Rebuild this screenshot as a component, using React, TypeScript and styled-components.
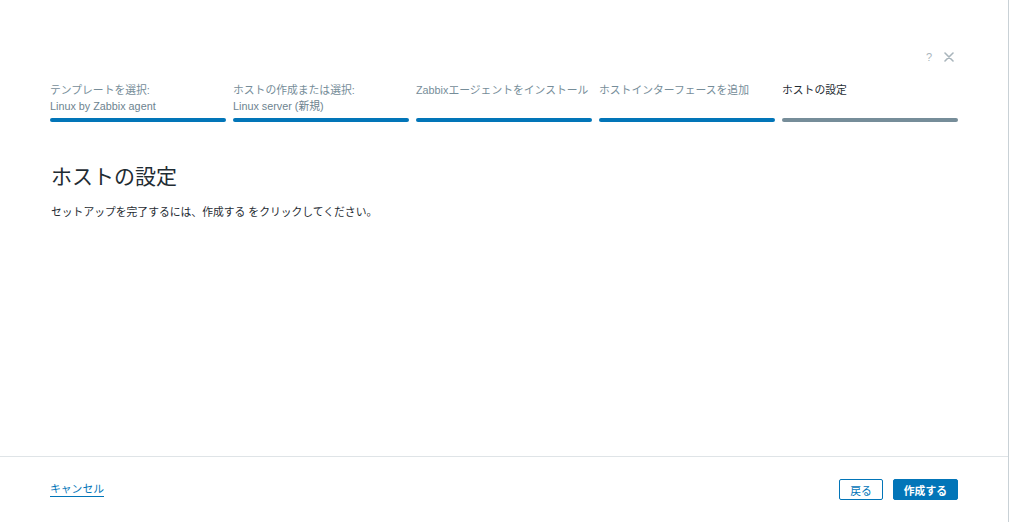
import styled, { createGlobalStyle } from "styled-components";

const GlobalStyle = createGlobalStyle`
  html, body {
    margin: 0;
    padding: 0;
    background: #ffffff;
  }
  body {
    font-family: "Liberation Sans", Arial, "Noto Sans CJK JP", sans-serif;
    font-size: 10.8px;
    color: #1f2c33;
  }
`;

const steps = [
  { title: "テンプレートを選択:", value: "Linux by Zabbix agent", done: true },
  { title: "ホストの作成または選択:", value: "Linux server (新規)", done: true },
  { title: "Zabbixエージェントをインストール", done: true },
  { title: "ホストインターフェースを追加", done: true },
  { title: "ホストの設定", done: false, current: true },
];

function App() {
  return (
    <>
      <GlobalStyle />
      <Dialog>
        <Head>
          <HeadButton title="ヘルプ">?</HeadButton>
          <CloseButton title="閉じる">
            <svg width="10" height="10" viewBox="0 0 10 10">
              <path d="M1 1 L9 9 M9 1 L1 9" stroke="currentColor" strokeWidth="1.6" strokeLinecap="round" />
            </svg>
          </CloseButton>
        </Head>
        <Body>
          <Steps>
            {steps.map((s) => (
              <Step key={s.title}>
                <StepTitle $current={!!s.current}>{s.title}</StepTitle>
                <StepValue>{s.value ?? "\u00a0"}</StepValue>
                <StepBar $done={s.done} />
              </Step>
            ))}
          </Steps>
          <Title>ホストの設定</Title>
          <Description>
            セットアップを完了するには、作成する をクリックしてください。
          </Description>
        </Body>
        <Footer>
          <CancelLink href="#">キャンセル</CancelLink>
          <Buttons>
            <OutlineButton>戻る</OutlineButton>
            <PrimaryButton>作成する</PrimaryButton>
          </Buttons>
        </Footer>
      </Dialog>
    </>
  );
}

export default App;

const Dialog = styled.div`
  width: 1009px;
  height: 522px;
  border-right: 1px solid #c9d1d6;
  display: flex;
  flex-direction: column;
  box-sizing: border-box;
  background: #ffffff;
`;

const Head = styled.div`
  height: 72px;
  display: flex;
  justify-content: flex-end;
  align-items: flex-end;
  gap: 12px;
  padding: 0 54px 9px 0;
  box-sizing: border-box;
`;

const HeadButton = styled.span`
  color: #a9b5bc;
  font-size: 11px;
  line-height: 12px;
  cursor: pointer;
`;

const CloseButton = styled.span`
  color: #a9b5bc;
  display: flex;
  padding-bottom: 1px;
  cursor: pointer;
`;

const Body = styled.div`
  flex: 1;
  padding: 10px 50px 0;
`;

const Steps = styled.div`
  display: grid;
  grid-template-columns: repeat(5, 176px);
  column-gap: 7px;
`;

const Step = styled.div`
  display: flex;
  flex-direction: column;
`;

const StepTitle = styled.div<{ $current: boolean }>`
  color: ${(p) => (p.$current ? "#1f2c33" : "#768d99")};
  line-height: 16px;
  white-space: nowrap;
`;

const StepValue = styled.div`
  color: #6d838f;
  line-height: 16px;
  white-space: nowrap;
`;

const StepBar = styled.div<{ $done: boolean }>`
  margin-top: 4px;
  height: 3.5px;
  border-radius: 2px;
  background: ${(p) => (p.$done ? "#0275b8" : "#768d99")};
`;

const Title = styled.h2`
  margin: 42px 0 0 1px;
  font-size: 21px;
  font-weight: normal;
  line-height: 26px;
  color: #1f2c33;
`;

const Description = styled.p`
  margin: 14px 0 0 1px;
  line-height: 16px;
  color: #1f2c33;
`;

const Footer = styled.div`
  height: 66px;
  border-top: 1px solid #dfe4e7;
  padding: 0 50px;
  display: flex;
  align-items: center;
  justify-content: space-between;
  box-sizing: border-box;
`;

const CancelLink = styled.a`
  color: #0275b8;
  text-decoration: none;
  border-bottom: 1px solid #0275b8;
  line-height: 14px;
`;

const Buttons = styled.div`
  display: flex;
  gap: 10px;
`;

const OutlineButton = styled.button`
  height: 21px;
  padding: 0 10px;
  font: inherit;
  color: #0275b8;
  background: #ffffff;
  border: 1px solid #0275b8;
  border-radius: 2px;
  cursor: pointer;
`;

const PrimaryButton = styled.button`
  height: 21px;
  padding: 0 10px;
  font: inherit;
  font-weight: bold;
  color: #ffffff;
  background: #0275b8;
  border: 1px solid #0275b8;
  border-radius: 2px;
  cursor: pointer;
`;
